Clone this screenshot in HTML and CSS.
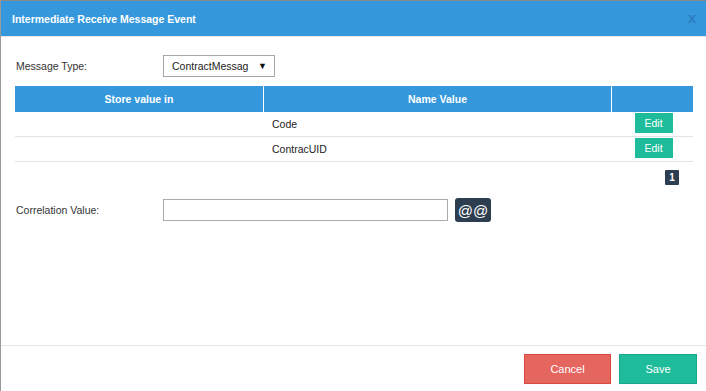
FILE: index.html
```html
<!DOCTYPE html>
<html lang="en">
<head>
    <meta charset="UTF-8">
    <title>Intermediate Receive Message Event</title>
    <link rel="stylesheet" href="styles.css">
</head>
<body>
    <div class="modal">
        <div class="modal-header">
            <span class="modal-title">Intermediate Receive Message Event</span>
            <span class="close">x</span>
        </div>
        <div class="modal-body">
            <div class="form-row">
                <label class="label">Message Type:</label>
                <div class="select">
                    <span class="select-text">ContractMessag</span>
                    <span class="arrow">&#9660;</span>
                </div>
            </div>
            <table class="grid">
                <thead>
                    <tr>
                        <th class="col-store">Store value in</th>
                        <th class="col-name">Name Value</th>
                        <th class="col-action"></th>
                    </tr>
                </thead>
                <tbody>
                    <tr>
                        <td></td>
                        <td>Code</td>
                        <td class="action"><button class="btn-edit">Edit</button></td>
                    </tr>
                    <tr>
                        <td></td>
                        <td>ContracUID</td>
                        <td class="action"><button class="btn-edit">Edit</button></td>
                    </tr>
                </tbody>
            </table>
            <div class="pager"><span class="page">1</span></div>
            <div class="form-row corr">
                <label class="label">Correlation Value:</label>
                <input type="text" class="text-input">
                <button class="btn-at">@@</button>
            </div>
        </div>
        <div class="modal-footer">
            <button class="btn btn-cancel">Cancel</button>
            <button class="btn btn-save">Save</button>
        </div>
    </div>
</body>
</html>
```

FILE: styles.css
```css
body { margin: 0; font-family: "Liberation Sans", Arial, sans-serif; font-size: 10.5px; color: #333; }
.modal { height: 391px; box-sizing: border-box; border-top: 1px solid #8a8a8a; border-left: 1px solid #9a9a9a; display: flex; flex-direction: column; background: #fff; }
.modal-header { height: 35px; flex: none; background: #3598dc; border-bottom: 1px solid #e5e5e5; display: flex; align-items: center; justify-content: space-between; padding: 0 10px 0 11px; }
.modal-title { color: #fff; font-weight: bold; font-size: 10.5px; }
.close { color: #2a7cc0; font-weight: bold; font-size: 15px; line-height: 1; margin-top: -3px; }
.modal-body { flex: 1; padding: 18px 13px 0 14px; }
.form-row { display: flex; align-items: center; }
.label { width: 147px; flex: none; padding-left: 1px; }
.select { height: 20px; width: 95px; border: 1px solid #a6a6a6; display: flex; align-items: center; justify-content: space-between; padding: 0 7px 0 8px; color: #222; }
.select-text { white-space: nowrap; }
.arrow { font-size: 9px; color: #111; }
.grid { width: 100%; border-collapse: collapse; margin-top: 9px; }
.grid th { background: #3598dc; color: #fff; font-weight: bold; height: 26px; padding: 0; border-right: 1px solid #fff; }
.grid th:last-child, .grid td:last-child { border-right: none; }
.col-store { width: 248px; }
.col-action { width: 81px; }
.grid td { height: 24px; padding: 0 0 0 8px; border-bottom: 1px solid #e3e3e3; border-right: 1px solid #fff; color: #222; }
.grid td.action { padding: 0; text-align: center; vertical-align: top; padding-top: 1px; height: 23px; }
.btn-edit { background: #1ebc9a; color: #fff; border: none; width: 38px; height: 20px; font-family: inherit; font-size: 10.5px; padding: 0; margin-left: 2px; }
.pager { display: flex; justify-content: flex-end; padding: 8px 14px 0 0; }
.page { background: #2c3e50; color: #fff; width: 14px; height: 15px; display: flex; align-items: center; justify-content: center; font-size: 10px; font-weight: bold; border-radius: 1px; }
.corr { margin-top: 13px; }
.text-input { width: 285px; height: 22px; box-sizing: border-box; border: 1px solid #aaa; margin: 0; padding: 0 4px; }
.btn-at { background: #2c3e50; color: #fff; border: none; border-radius: 3px; width: 36px; height: 24px; margin-left: 7px; font-family: inherit; font-size: 15px; padding: 0; }
.modal-footer { flex: none; border-top: 1px solid #e5e5e5; padding: 8px 9px 7px; display: flex; justify-content: flex-end; gap: 8px; }
.btn { height: 30px; border: 1px solid; font-family: inherit; font-size: 11px; color: #fff; padding: 0; }
.btn-cancel { width: 87px; background: #e5655f; border-color: #dc4a3e; }
.btn-save { width: 78px; background: #1ebc9a; border-color: #19a98a; }
```
